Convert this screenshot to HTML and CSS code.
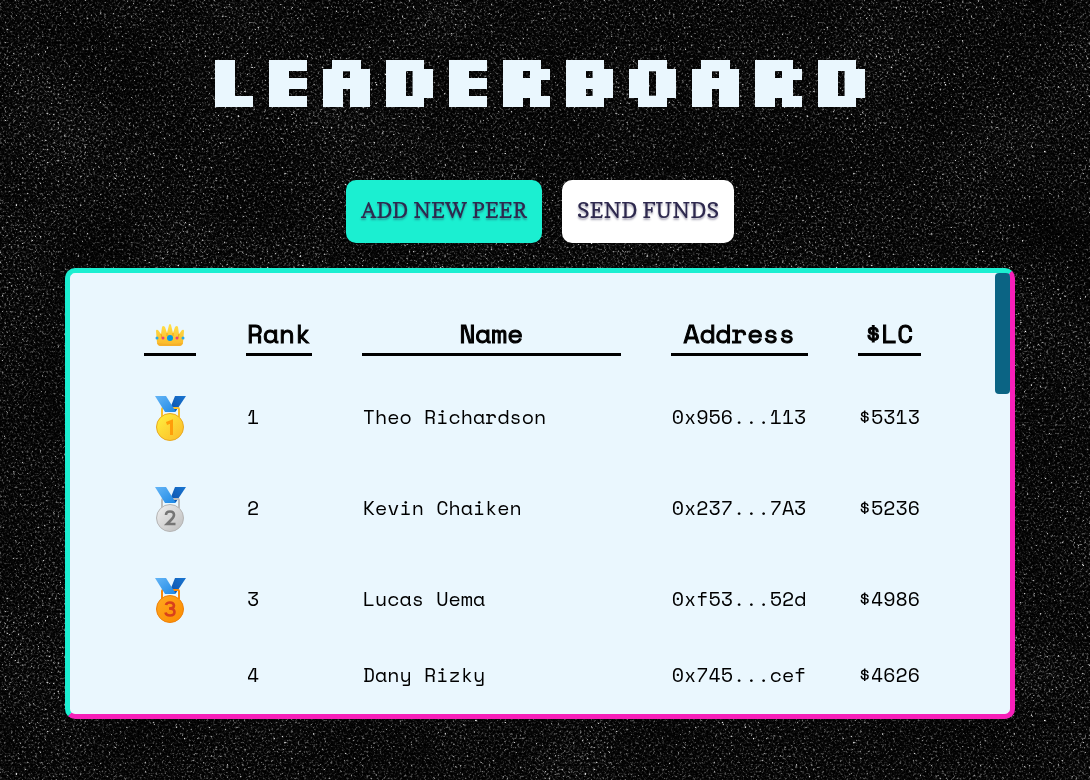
FILE: index.html
```html
<!DOCTYPE html>
<html lang="en">
<head>
<meta charset="utf-8">
<title>Leaderboard</title>
<link rel="stylesheet" href="styles.css">
</head>
<body>
<svg class="backdrop" aria-hidden="true">
  <defs>
    <filter id="grain" x="0" y="0" width="100%" height="100%" color-interpolation-filters="sRGB">
      <feTurbulence type="fractalNoise" baseFrequency="0.45" numOctaves="3" seed="7" result="fine"/>
      <feTurbulence type="fractalNoise" baseFrequency="0.01" numOctaves="2" seed="3" result="clouds"/>
      <feComposite in="fine" in2="clouds" operator="arithmetic" k1="0" k2="1" k3="0.1" k4="-0.05"/>
      <feColorMatrix values="1 0 0 0 0  1 0 0 0 0  1 0 0 0 0  0 0 0 0 1"/>
      <feComponentTransfer>
        <feFuncR type="table" tableValues="0 0 0 0.01 0.02 0.05 0.15 0.33 0.7 1 1"/>
        <feFuncG type="table" tableValues="0 0 0 0.01 0.02 0.05 0.15 0.33 0.7 1 1"/>
        <feFuncB type="table" tableValues="0 0 0 0.01 0.02 0.05 0.15 0.33 0.7 1 1"/>
      </feComponentTransfer>
    </filter>
    <linearGradient id="ribbon" x1="0" y1="0" x2="1" y2="1">
      <stop offset="0" stop-color="#64b5f6"/><stop offset="1" stop-color="#1e88e5"/>
    </linearGradient>
    <linearGradient id="ribbon-dark" x1="0" y1="1" x2="1" y2="0">
      <stop offset="0" stop-color="#0d4fa8"/><stop offset="1" stop-color="#1976d2"/>
    </linearGradient>
    <linearGradient id="gold" x1="0" y1="0" x2="1" y2="1">
      <stop offset="0" stop-color="#fff23f"/><stop offset="1" stop-color="#fbb829"/>
    </linearGradient>
    <linearGradient id="silver" x1="0" y1="0" x2="1" y2="1">
      <stop offset="0" stop-color="#f0f0f0"/><stop offset="1" stop-color="#bdbdbd"/>
    </linearGradient>
    <linearGradient id="bronze" x1="0" y1="0" x2="1" y2="1">
      <stop offset="0" stop-color="#ffa820"/><stop offset="1" stop-color="#fb8c00"/>
    </linearGradient>
    <linearGradient id="crown-gold" x1="0" y1="0" x2="0" y2="1">
      <stop offset="0" stop-color="#ffe04a"/><stop offset="1" stop-color="#fbb829"/>
    </linearGradient>
    <symbol id="straps" viewBox="0 0 31 45">
      <path d="M20 0H31L21 15H14Z" fill="url(#ribbon-dark)"/>
    </symbol>
    <symbol id="sash" viewBox="0 0 31 45">
      <path d="M0 0H11L21 16H10Z" fill="url(#ribbon)"/>
    </symbol>
  </defs>
  <rect width="100%" height="100%" filter="url(#grain)"/>
</svg>
<main class="page">
  <h1 class="title">LEADERBOARD</h1>
  <div class="actions">
    <button class="btn btn-primary" type="button">ADD NEW PEER</button>
    <button class="btn" type="button">SEND FUNDS</button>
  </div>
  <section class="panel">
    <div class="scroller">
      <table class="board">
        <thead>
          <tr>
            <th class="badge">
              <svg class="crown" viewBox="0 0 30 23" role="img" aria-label="Crown">
                <path d="M2 20 1 8Q1 6 3 7L6 11 7 4Q8 2 10 4L12 10 14 2Q15 0 16 2L18 10 20 4Q22 2 23 4L24 11 27 7Q29 6 29 8L28 20Q27 23 24 23H6Q3 23 2 20Z" fill="url(#crown-gold)"/>
                <path d="M6 11 7 15M24 11 23 15M12 10 12 13M18 10 18 13" fill="none" stroke="#f2a31b"/>
                <path d="M2 20Q15 22 28 20Q27 23 24 23H6Q3 23 2 20Z" fill="#f5b02b"/>
                <circle cx="15" cy="15" r="3" fill="#039be5"/>
                <circle cx="8" cy="15" r="1.500" fill="#ec3f7a"/><circle cx="22" cy="15" r="1.500" fill="#ec3f7a"/>
                <circle cx="2" cy="15" r="1.500" fill="#29a9e8"/><circle cx="28" cy="15" r="1.500" fill="#29a9e8"/>
              </svg>
            </th>
            <th>Rank</th><th class="name">Name</th><th class="address">Address</th><th>$LC</th>
          </tr>
        </thead>
        <tbody>
          <tr>
            <td class="badge">
              <svg class="medal" viewBox="0 0 31 45" role="img" aria-label="First place">
                <use href="#straps"/>
                <path d="M7 21V13Q7 12 8 12H23Q24 12 24 13V21" fill="none" stroke="#f9c02f" stroke-width="2"/>
                <use href="#sash"/>
                <circle cx="15" cy="31" r="13.500" fill="url(#gold)" stroke="#e9a922"/>
                <path d="M16.500 39V25.500L11.500 27.500" fill="none" stroke="#ff9d0a" stroke-width="3"/>
              </svg>
            </td>
            <td>1</td><td>Theo Richardson</td><td>0x956...113</td><td>$5313</td>
          </tr>
          <tr>
            <td class="badge">
              <svg class="medal" viewBox="0 0 31 45" role="img" aria-label="Second place">
                <use href="#straps"/>
                <path d="M7 21V13Q7 12 8 12H23Q24 12 24 13V21" fill="none" stroke="#bdbdbd" stroke-width="2"/>
                <use href="#sash"/>
                <circle cx="15" cy="31" r="13.500" fill="url(#silver)" stroke="#b5b5b5"/>
                <path d="M11 28Q11 24.500 15 24.500T19 28Q19 30 16 33L12 37H20.500" fill="none" stroke="#757575" stroke-width="2.600"/>
              </svg>
            </td>
            <td>2</td><td>Kevin Chaiken</td><td>0x237...7A3</td><td>$5236</td>
          </tr>
          <tr>
            <td class="badge">
              <svg class="medal" viewBox="0 0 31 45" role="img" aria-label="Third place">
                <use href="#straps"/>
                <path d="M7 21V13Q7 12 8 12H23Q24 12 24 13V21" fill="none" stroke="#f98a0b" stroke-width="2"/>
                <use href="#sash"/>
                <circle cx="15" cy="31" r="13.500" fill="url(#bronze)" stroke="#ef8009"/>
                <path d="M11 27Q11.500 24.500 15 24.500T19 27.500Q19 30.500 14 30.500Q19.500 30.500 19.500 34T15 37.500Q11 37.500 10.500 34.500" fill="none" stroke="#d8401c" stroke-width="2.600"/>
              </svg>
            </td>
            <td>3</td><td>Lucas Uema</td><td>0xf53...52d</td><td>$4986</td>
          </tr>
          <tr><td></td><td>4</td><td>Dany Rizky</td><td>0x745...cef</td><td>$4626</td></tr>
        </tbody>
      </table>
    </div>
    <div class="track"><div class="thumb"></div></div>
  </section>
</main>
</body>
</html>
```
FILE: styles.css
```css
* { box-sizing: border-box; }

body {
  margin: 0;
  background: #000;
  color: #000;
  font-family: "Space Mono", "Liberation Mono", monospace;
}

.backdrop {
  position: fixed;
  inset: 0;
  width: 100%;
  height: 100%;
}

.page {
  position: relative;
  display: flex;
  flex-direction: column;
  align-items: center;
  height: 100vh;
  min-height: 560px;
  padding: 28px 10px 61px 0;
}

.title {
  margin: 0;
  color: #eaf7fe;
  font: bold 72px/100px Silkscreen, "DejaVu Sans", sans-serif;
  -webkit-text-stroke: 2px #eaf7fe;
}

.actions {
  display: flex;
  gap: 20px;
  margin: 52px 0 25px;
}

.btn {
  padding: 16px 15px 19px;
  border: 0;
  border-radius: 10px;
  background: #fff;
  color: #2e294e;
  font: 22px/28px Copse, "Liberation Serif", serif;
  text-shadow: 0 2px 2px rgba(46, 41, 78, 0.4);
  cursor: pointer;
}

.btn-primary { background: #1befd1; }

.panel {
  display: flex;
  flex: 1;
  width: 88%;
  min-height: 0;
  border: 5px solid;
  border-color: #1befd1 #f71fb9 #f71fb9 #1befd1;
  border-radius: 10px;
  background: #eaf7fe;
}

.scroller {
  flex: 1;
  overflow: auto;
  scrollbar-width: none;
}

.board {
  margin: 11px auto 0;
  border-collapse: separate;
  border-spacing: 50px 30px;
  font-size: 20px;
  line-height: 31px;
}

.board th {
  height: 42px;
  padding: 0 1px;
  border-bottom: 3px solid #000;
  font-size: 26px;
  font-weight: 400;
  line-height: 39px;
  -webkit-text-stroke: 1px #000;
}

.board td { padding: 0 1px; }

.board .badge {
  width: 52px;
  text-align: center;
}

.board .name { width: 259px; }
.board .address { width: 137px; }

.crown,
.medal {
  display: block;
  margin: 0 auto;
}

.crown {
  width: 30px;
  height: 25px;
  padding-top: 2px;
}

.medal {
  width: 31px;
  height: 61px;
  padding-top: 4px;
}

.track { width: 15px; }

.thumb {
  height: 121px;
  border-radius: 4px;
  background: #0b6484;
}
```
